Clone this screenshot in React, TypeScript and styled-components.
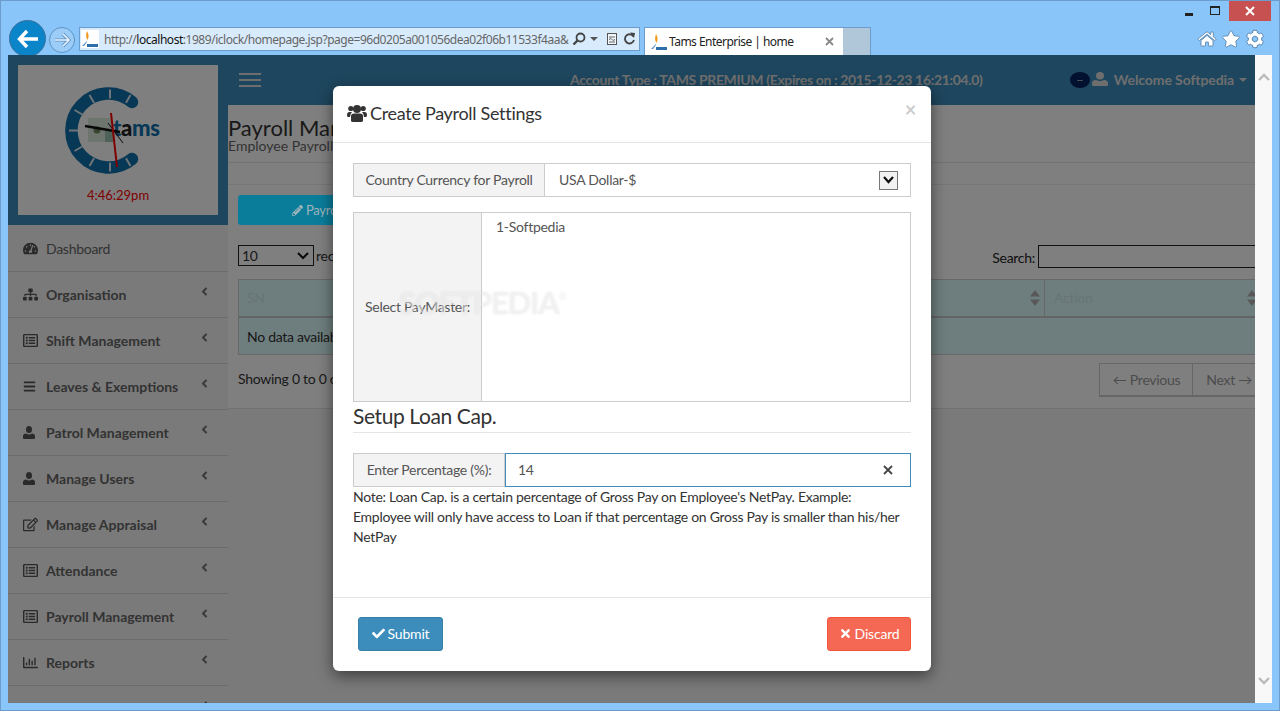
import React from "react";
import styled, { createGlobalStyle } from "styled-components";
import {
  FaTachometerAlt, FaSitemap, FaRegListAlt, FaBars, FaRegEdit, FaRegChartBar,
  FaCheck, FaTimes, FaPencilAlt, FaAngleLeft, FaHome, FaStar, FaCog,
} from "react-icons/fa";

const Global = createGlobalStyle`
  html, body { margin: 0; padding: 0; height: 100%; overflow: hidden; }
  * { box-sizing: border-box; }
  body { font-family: Lato, "Noto Sans", sans-serif; font-size: 14px; color: #333; letter-spacing: -0.28px; }
`;

const Frame = styled.div`
  width: 1280px; height: 711px; background: #8ac5f9; display: flex; flex-direction: column;
  border: 1px solid #6c9ccb; border-bottom: 0; padding: 0 7px 8px; position: relative; overflow: hidden;
  box-shadow: inset 0 -1px 0 #6c9ccb;
`;
const WindowBar = styled.div`
  height: 20px; display: flex; justify-content: flex-end; align-items: flex-start; margin-right: 1px;
`;
const Ctl = styled.div<{ $w: number }>`
  width: ${(p) => p.$w}px; height: 20px; display: flex; align-items: center; justify-content: center; color: #111;
`;
const CloseCtl = styled(Ctl)` background: #c75050; color: #fff; `;
const MinGlyph = styled.span` width: 8px; height: 3px; background: #222; margin-top: 7px; margin-right: 3px; `;
const MaxGlyph = styled.span` width: 10px; height: 9px; border: 1px solid #222; border-top-width: 2px; margin-right: 2px; margin-top: -1px; `;

const NavRow = styled.div`
  height: 34px; display: flex; align-items: flex-start; padding: 6px 0 0 1px;
`;
const BackBtn = styled.div`
  width: 37px; height: 37px; border-radius: 50%; background: #0a85c9; margin-top: -7px; flex: none;
  display: flex; align-items: center; justify-content: center; border: 1px solid #3a6f9c;
`;
const ForwardBtn = styled.div`
  width: 26px; height: 26px; border-radius: 50%; margin: 0 4px 0 3px; flex: none; background: #9ccdf9;
  border: 1px solid #5f93c4; display: flex; align-items: center; justify-content: center;
`;
const UrlBox = styled.div`
  width: 561px; height: 24px; background: #d8ebfc; border: 1px solid #6c9ccb; display: flex; align-items: center;
  flex: none; padding-right: 3px;
`;
const UrlFav = styled.div` width: 18px; height: 18px; margin: 0 5px 0 1px; flex: none; background: #fff; `;
const UrlText = styled.div`
  width: 468px; overflow: hidden; white-space: nowrap; font: 12px "Noto Sans", sans-serif; letter-spacing: -0.47px; color: #666;
  flex: none;
  b { font-weight: 400; color: #111; }
`;
const UrlTools = styled.div`
  margin-left: auto; display: flex; align-items: center; gap: 4px; color: #444;
`;
const CompatIcon = styled.svg` margin-left: 3px; `;
const Caret = styled.span`
  width: 0; height: 0; border: 4px solid transparent; border-top-color: #555; border-bottom: 0;
`;
const TabStrip = styled.div` display: flex; height: 28px; margin-left: 4px; flex: none; border: 1px solid #6c9ccb; border-bottom: 0; `;
const Tab = styled.div`
  width: 198px; background: #fff; display: flex; align-items: center; padding: 0 9px 0 5px;
  font: 12px "Noto Sans", sans-serif; color: #222; letter-spacing: -0.53px; white-space: nowrap;
`;
const TabFav = styled.div` width: 18px; height: 18px; margin-right: 1px; flex: none; `;
const TabClose = styled.span` margin-left: auto; color: #888; display: flex; `;
const TabRest = styled.div` width: 27px; background: #b0c6d9; `;
const ToolIcons = styled.div`
  margin-left: auto; display: flex; align-items: center; gap: 6px; height: 24px; margin-right: 8px; color: #fff;
  svg { stroke: #3f6d99; stroke-width: 22px; overflow: visible; }
`;

const Viewport = styled.div`
  flex: 1; min-height: 0; display: flex; position: relative; overflow: hidden; z-index: 1;
`;
const Page = styled.div` width: 1247px; flex: none; display: flex; overflow: hidden; background: #f5f5f5; `;
const Scrollbar = styled.div`
  flex: 1; background: #f8f8f8; display: flex; flex-direction: column; justify-content: space-between;
  align-items: center; padding: 18px 0; color: #bbb;
`;

const Sidebar = styled.aside` width: 220px; flex: none; background: #f5f5f5; `;
const LogoPanel = styled.div` background: #3c8dbc; padding: 10px; height: 170px; `;
const LogoCard = styled.div`
  background: #fff; height: 150px; display: flex; flex-direction: column; align-items: center;
`;
const LogoSvg = styled.svg` margin: 18px 0 0 -6px; flex: none; `;
const ClockText = styled.div` color: #f00; font-size: 13px; line-height: 18px; letter-spacing: 0; `;
const SideItem = styled.div<{ $top?: boolean }>`
  height: ${(p) => (p.$top ? 47 : 46)}px; display: flex; align-items: center; padding: 0 17px 0 15px; border-bottom: 1px solid #d9d9d9;
  color: #666; font-weight: ${(p) => (p.$top ? 400 : 700)}; white-space: nowrap; font-size: 14px;
  letter-spacing: ${(p) => (p.$top ? "-0.28px" : "0")};
`;
const SideIcon = styled.span` width: 23px; flex: none; display: flex; align-items: center; color: #555; `;
const SideChevron = styled.span` margin-left: auto; display: flex; transform: translateY(-3px); color: #777; `;

const Main = styled.div` flex: 1; min-width: 0; display: flex; flex-direction: column; `;
const Header = styled.header`
  height: 50px; background: #3c8dbc; display: flex; align-items: center; padding: 0 8px 2px 11px; flex: none; color: #dcdcdc;
  font-weight: 700; white-space: nowrap; position: relative;
`;
const Burger = styled.div`
  width: 22px; height: 14px; border-top: 2px solid #ddd; border-bottom: 2px solid #ddd; position: relative; flex: none; margin-top: 2px;
  &::after { content: ""; position: absolute; left: 0; right: 0; top: 4px; height: 2px; background: #ddd; }
`;
const AccountText = styled.div` margin-left: 309px; font-size: 14px; letter-spacing: -0.36px; `;
const UserArea = styled.div` margin-left: auto; display: flex; align-items: center; `;
const Avatar = styled.div`
  width: 20px; height: 16px; border-radius: 50%; background: #03225f; margin-right: 2px; display: flex; align-items: center; justify-content: center;
  color: #ddd; font-size: 8px; line-height: 8px; margin-top: 2px;
`;
const WelcomeLabel = styled.span` margin-left: 6px; letter-spacing: -0.1px; `;
const WelcomeCaret = styled.span`
  width: 0; height: 0; border: 4px solid transparent; border-top-color: #ddd; border-bottom: 0; margin-left: 5px; margin-top: 2px;
`;

const Content = styled.div` flex: none; background: #fff; height: 304px; border-bottom: 1px solid #e4e4e4; `;
const TitleBlock = styled.div` height: 58px; padding: 11px 0 0 0; border-bottom: 1px solid #e6e6e6; `;
const PageTitle = styled.h1` font-size: 22px; font-weight: 400; margin: 0; line-height: 24px; letter-spacing: 0; `;
const PageSub = styled.div` font-size: 14px; line-height: 12px; color: #666; letter-spacing: 0; `;
const Strip = styled.div` height: 22px; border-bottom: 1px solid #eee; `;
const Inner = styled.div` width: 1040px; padding: 10px 0 0 10px; `;
const PrimaryAction = styled.div`
  width: 260px; height: 30px; background: #0a7d9b; border-radius: 3px; color: #9fb4ba; display: flex; align-items: center; gap: 3px;
  font-size: 13px; padding-left: 54px; position: relative; z-index: 1;
`;
const ControlsRow = styled.div` display: flex; align-items: flex-start; margin-top: 20px; height: 21px; `;
const LenSelect = styled.div`
  width: 76px; height: 21px; border: 1px solid #222; display: flex; align-items: center; padding: 0 4px 0 3px; justify-content: space-between;
`;
const LenLabel = styled.span` margin-left: 2px; line-height: 21px; `;
const SearchWrap = styled.div` margin-left: auto; display: flex; align-items: flex-start; color: #222; margin-right: -10px; `;
const SearchLabel = styled.span` line-height: 20px; padding-top: 3px; `;
const SearchInput = styled.div` width: 240px; height: 23px; border: 1px solid #222; margin-left: 3px; background: #fff; `;
const DataTable = styled.div` margin-top: 13px; border: 1px solid #d0d0d0; width: 1030px; background: #dcfcfc; `;
const TableHead = styled.div` height: 38px; display: flex; border-bottom: 2px solid #c9c9c9; `;
const HeadCell = styled.div<{ $w?: number }>`
  width: ${(p) => (p.$w ? `${p.$w}px` : "auto")}; flex: ${(p) => (p.$w ? "none" : "1")}; border-right: ${(p) => (p.$w ? "1px solid #cfcfcf" : "0")};
  display: flex; align-items: center; justify-content: space-between;
  padding: 0 ${(p) => (p.$w ? 4 : 10)}px 2px ${(p) => (p.$w ? 8 : 9)}px; color: #d0eaea;
`;
const SortIcon = styled.svg` flex: none; margin-top: 2px; `;
const TableRow = styled.div` height: 36px; display: flex; align-items: center; padding-left: 8px; `;
const TableFoot = styled.div` display: flex; align-items: flex-start; justify-content: space-between; margin-top: 8px; `;
const FootText = styled.div` line-height: 32px; color: #333; `;
const Pager = styled.div` display: flex; height: 34px; border: 1px solid #ccc; border-bottom-width: 2px; color: #999; margin-right: 3px; `;
const PagerItem = styled.div` padding: 0 12px 0 13px; display: flex; align-items: center; border-right: 1px solid #ccc; white-space: nowrap;
  &:last-child { border-right: 0; }
`;

const Backdrop = styled.div` position: absolute; left: 0; top: 0; bottom: 0; width: 1247px; background: rgba(0,0,0,.5); `;
const Modal = styled.div`
  position: absolute; z-index: 2; left: 325px; top: 31px; width: 598px; height: 585px; background: #fff; border-radius: 6px;
  box-shadow: 0 5px 15px rgba(0,0,0,.5); display: flex; flex-direction: column;
`;
const ModalHead = styled.div`
  height: 57px; padding: 0 15px 2px 14px; border-bottom: 1px solid #e5e5e5; display: flex; align-items: center; flex: none; position: relative;
`;
const ModalTitle = styled.h4` margin: 0; font-size: 18px; font-weight: 400; display: flex; align-items: center; gap: 3px; color: #333; letter-spacing: -0.3px; `;
const ModalClose = styled.span`
  position: absolute; right: 15px; top: 12px; font-size: 20px; font-weight: 700; color: #000; opacity: .2; line-height: 22px;
`;
const ModalBody = styled.div` flex: 1; padding: 20px 20px 0; `;
const Group = styled.div<{ $h: number }>`
  display: flex; height: ${(p) => p.$h}px; border: 1px solid #ccc; color: #555;
`;
const Addon = styled.div<{ $w: number }>`
  width: ${(p) => p.$w}px; flex: none; background: #f3f3f3; border-right: 1px solid #ccc; display: flex; align-items: center; justify-content: center; white-space: nowrap; padding-bottom: 2px;
`;
const SelectBox = styled.div` flex: 1; display: flex; align-items: center; padding: 0 12px 0 14px; justify-content: space-between; `;
const SelectText = styled.span` padding-bottom: 2px; `;
const SelectArrow = styled.span`
  width: 19px; height: 19px; border: 1px solid #777; background: #f2f2f2; display: flex; align-items: center; justify-content: center;
`;
const ListBox = styled.div` flex: 1; padding: 4px 14px; line-height: 20px; `;
const GroupGap = styled.div` height: 15px; `;
const SectionTitle = styled.h3`
  margin: 0 0 20px; font-size: 21px; font-weight: 400; line-height: 28px; height: 31px; border-bottom: 1px solid #e5e5e5; color: #333; letter-spacing: -0.4px;
`;
const FieldInput = styled.div`
  flex: 1; margin: -1px -1px -1px 0; border: 1px solid #3c8dbc; display: flex; align-items: center; justify-content: space-between; padding: 0 17px 0 12px; color: #555;
`;
const FieldClear = styled.span` display: flex; color: #444; `;
const Note = styled.p` margin: 0; line-height: 20px; color: #333; `;
const ModalFoot = styled.div`
  height: 74px; border-top: 1px solid #e5e5e5; flex: none; display: flex; align-items: flex-start; justify-content: space-between; padding: 19px 20px 0 25px;
`;
const FootBtn = styled.button<{ $bg: string; $line: string; $w: number }>`
  width: ${(p) => p.$w}px; height: 34px; background: ${(p) => p.$bg}; border: 1px solid ${(p) => p.$line}; color: #fff; border-radius: 3px;
  font: 14px Lato, "Noto Sans", sans-serif; letter-spacing: -0.2px; display: flex; align-items: center; justify-content: center; gap: 3px; padding: 0 0 2px;
`;
const Watermark = styled.div`
  position: absolute; z-index: 3; left: 391px; top: 228px; font-size: 31px; font-weight: 700; color: rgba(255,255,255,.42); letter-spacing: -1.1px;
  text-shadow: 0 0 2px rgba(160,160,160,.25); pointer-events: none; white-space: nowrap;
  sup { font-size: 10px; vertical-align: 14px; font-weight: 400; }
`;

const Fav = () => (
  <svg width="18" height="18" viewBox="0 0 18 18">
    <rect width="18" height="18" fill="#fff" />
    <path d="M6 1c2 3 2 6 .5 9C5 8 4.5 5 6 1z" fill="#f29a1c" />
    <path d="M6 11L1 16h2l3-4z" fill="#5a8fc9" />
    <rect x="6" y="14" width="11" height="3" fill="#2d6fa8" />
  </svg>
);

const UserIcon = ({ w, h }: { w: number; h: number }) => (
  <svg width={w} height={h} viewBox="0 0 12 13" preserveAspectRatio="none" fill="currentColor">
    <ellipse cx="6" cy="3.5" rx="3" ry="3.5" />
    <path d="M0 12V10Q0 8 3 7.5Q6 9.5 9 7.5Q12 8 12 10V12Q12 13 11 13H1Q0 13 0 12z" />
  </svg>
);

const UsersIcon = () => (
  <svg width="20" height="18" viewBox="0 0 20 18" fill="#333">
    <circle cx="3.8" cy="4.5" r="2.6" />
    <circle cx="16.2" cy="4.5" r="2.6" />
    <circle cx="10" cy="5" r="4" />
    <path d="M4 16.5V12Q4 9.5 7 9.5H13Q16 9.5 16 12V16.5Q16 18 14 18H6Q4 18 4 16.5z" />
    <path d="M0 11Q0 8 2.5 8H5Q3 10 3 13H1Q0 13 0 11zM20 11Q20 8 17.5 8H15Q17 10 17 13H19Q20 13 20 11z" />
  </svg>
);

const Logo = () => (
  <LogoSvg width="110" height="103" viewBox="0 0 110 103">
    <path d="M72 19A37 37 0 1 0 72 76" fill="none" stroke="#0e70ad" strokeWidth="12.5" strokeLinecap="round" />
    <path
      d="M50 6.5V15.5M50 79.5V88.5M9 47.5H18M34 19.8L29.5 12M66 19.8L70.5 12M22.3 31.5L14.5 27M22.3 63.5L14.5 68M34 75.2L29.5 83M66 75.2L70.5 83"
      stroke="#dfeaf0" strokeWidth="2"
    />
    <rect x="28" y="35" width="24" height="24" fill="#dce8dd" />
    <rect x="45" y="47" width="8" height="12" fill="#9cc5b4" />
    <circle cx="37" cy="47" r="3.5" fill="#6f8a5f" />
    <text x="53" y="53" fontFamily="Lato, sans-serif" fontWeight="900" fontSize="22" fill="#0e70ad">
      t<tspan fill="#222">a</tspan>ms
    </text>
    <path d="M25 43L60 49" stroke="#111" strokeWidth="2.4" fill="none" />
    <path d="M48 40L63 60" stroke="#111" strokeWidth="1" fill="none" />
    <path d="M51 30L57 84" stroke="#f00" strokeWidth="2" fill="none" />
  </LogoSvg>
);

const items: [React.ReactNode, string][] = [
  [<FaSitemap size={15} />, "Organisation"],
  [<FaRegListAlt size={15} />, "Shift Management"],
  [<FaBars size={13} />, "Leaves & Exemptions"],
  [<UserIcon w={12} h={13} />, "Patrol Management"],
  [<UserIcon w={12} h={13} />, "Manage Users"],
  [<FaRegEdit size={15} />, "Manage Appraisal"],
  [<FaRegListAlt size={15} />, "Attendance"],
  [<FaRegListAlt size={15} />, "Payroll Management"],
  [<FaRegChartBar size={15} />, "Reports"],
  [null, ""],
];

const Sort = () => (
  <SortIcon width="10" height="16" viewBox="0 0 10 16" fill="#b0b0b0"><path d="M0 6.5L5 0l5 6.5zM0 9.5h10L5 16z" /></SortIcon>
);

export default function App() {
  return (
    <>
      <Global />
      <Frame>
        <WindowBar>
          <Ctl $w={26}><MinGlyph /></Ctl>
          <Ctl $w={26}><MaxGlyph /></Ctl>
          <CloseCtl $w={42}>
            <svg width="10" height="10" viewBox="0 0 10 10"><path d="M1 1l8 8M9 1l-8 8" stroke="#fff" strokeWidth="2" /></svg>
          </CloseCtl>
        </WindowBar>
        <NavRow>
          <BackBtn>
            <svg width="22" height="20" viewBox="0 0 22 20"><path d="M10 2L2.5 10l7.5 8M3 10h18" fill="none" stroke="#fff" strokeWidth="3.4" /></svg>
          </BackBtn>
          <ForwardBtn>
            <svg width="18" height="16" viewBox="0 0 18 16"><path d="M10 2l6 6-6 6M16 8H2" fill="none" stroke="#5f93c4" strokeWidth="3.2" /><path d="M10 2l6 6-6 6M16 8H2" fill="none" stroke="#eaf4fd" strokeWidth="1.6" /></svg>
          </ForwardBtn>
          <UrlBox>
            <UrlFav><Fav /></UrlFav>
            <UrlText>http://<b>localhost</b>:1989/iclock/homepage.jsp?page=96d0205a001056dea02f06b11533f4aa&amp;</UrlText>
            <UrlTools>
              <svg width="14" height="14" viewBox="0 0 14 14"><circle cx="8.5" cy="5.5" r="4" fill="none" stroke="#444" strokeWidth="1.8" /><path d="M5.5 8.5L1.5 12.5" stroke="#444" strokeWidth="2.4" /></svg>
              <Caret />
              <CompatIcon width="14" height="14" viewBox="0 0 14 14"><rect x="2.5" y="1.5" width="9" height="11" fill="#eef5fb" stroke="#555" /><path d="M4 5h6M4 7.5l2-1 2 2 2-1M4 10h6" stroke="#666" fill="none" /></CompatIcon>
              <svg width="13" height="14" viewBox="0 0 13 14"><path d="M10.5 4.5A4.6 4.6 0 1 0 11 8" fill="none" stroke="#444" strokeWidth="1.8" /><path d="M7 0.5l5 0.5-1 5z" fill="#444" /></svg>
            </UrlTools>
          </UrlBox>
          <TabStrip>
            <Tab>
              <TabFav><Fav /></TabFav>
              Tams Enterprise | home
              <TabClose><svg width="9" height="9" viewBox="0 0 9 9"><path d="M1 1l7 7M8 1L1 8" stroke="#888" strokeWidth="1.8" /></svg></TabClose>
            </Tab>
            <TabRest />
          </TabStrip>
          <ToolIcons>
            <FaHome size={18} />
            <FaStar size={18} />
            <FaCog size={18} />
          </ToolIcons>
        </NavRow>
        <Viewport>
          <Page>
            <Sidebar>
              <LogoPanel>
                <LogoCard>
                  <Logo />
                  <ClockText>4:46:29pm</ClockText>
                </LogoCard>
              </LogoPanel>
              <SideItem $top>
                <SideIcon><FaTachometerAlt size={15} /></SideIcon>Dashboard
              </SideItem>
              {items.map(([icon, label], i) => (
                <SideItem key={i}>
                  <SideIcon>{icon}</SideIcon>{label}
                  <SideChevron><FaAngleLeft size={13} /></SideChevron>
                </SideItem>
              ))}
            </Sidebar>
            <Main>
              <Header>
                <Burger />
                <AccountText>Account Type : TAMS PREMIUM (Expires on : 2015-12-23 16:21:04.0)</AccountText>
                <UserArea>
                  <Avatar>--</Avatar>
                  <UserIcon w={16} h={14} />
                  <WelcomeLabel>Welcome Softpedia</WelcomeLabel>
                  <WelcomeCaret />
                </UserArea>
              </Header>
              <Content>
                <TitleBlock>
                  <PageTitle>Payroll Management</PageTitle>
                  <PageSub>Employee Payroll</PageSub>
                </TitleBlock>
                <Strip />
                <Inner>
                  <PrimaryAction><FaPencilAlt size={11} /> Payroll</PrimaryAction>
                  <ControlsRow>
                    <LenSelect>10 <svg width="12" height="8" viewBox="0 0 12 8"><path d="M1 1l5 5 5-5" fill="none" stroke="#111" strokeWidth="2" /></svg></LenSelect>
                    <LenLabel>records</LenLabel>
                    <SearchWrap><SearchLabel>Search:</SearchLabel><SearchInput /></SearchWrap>
                  </ControlsRow>
                  <DataTable>
                    <TableHead>
                      <HeadCell $w={806}>SN<Sort /></HeadCell>
                      <HeadCell>Action<Sort /></HeadCell>
                    </TableHead>
                    <TableRow>No data available in table</TableRow>
                  </DataTable>
                  <TableFoot>
                    <FootText>Showing 0 to 0 of 0 entries</FootText>
                    <Pager>
                      <PagerItem>← Previous</PagerItem>
                      <PagerItem>Next →</PagerItem>
                    </Pager>
                  </TableFoot>
                </Inner>
              </Content>
            </Main>
          </Page>
          <Scrollbar>
            <svg width="12" height="8" viewBox="0 0 12 8"><path d="M1 7l5-5 5 5" fill="none" stroke="#bbb" strokeWidth="2.4" /></svg>
            <svg width="12" height="8" viewBox="0 0 12 8"><path d="M1 1l5 5 5-5" fill="none" stroke="#bbb" strokeWidth="2.4" /></svg>
          </Scrollbar>
          <Backdrop />
          <Modal>
            <ModalHead>
              <ModalTitle><UsersIcon />Create Payroll Settings</ModalTitle>
              <ModalClose>×</ModalClose>
            </ModalHead>
            <ModalBody>
              <Group $h={34}>
                <Addon $w={191}>Country Currency for Payroll</Addon>
                <SelectBox>
                  <SelectText>USA Dollar-$</SelectText>
                  <SelectArrow>
                    <svg width="11" height="8" viewBox="0 0 11 8"><path d="M1 1l4.5 5L10 1" fill="none" stroke="#111" strokeWidth="2.2" /></svg>
                  </SelectArrow>
                </SelectBox>
              </Group>
              <GroupGap />
              <Group $h={190}>
                <Addon $w={128}>Select PayMaster:</Addon>
                <ListBox>1-Softpedia</ListBox>
              </Group>
              <SectionTitle>Setup Loan Cap.</SectionTitle>
              <Group $h={34}>
                <Addon $w={151}>Enter Percentage (%):</Addon>
                <FieldInput>
                  <SelectText>14</SelectText>
                  <FieldClear><svg width="10" height="10" viewBox="0 0 10 10"><path d="M1 1l8 8M9 1L1 9" stroke="#444" strokeWidth="1.8" /></svg></FieldClear>
                </FieldInput>
              </Group>
              <Note>Note: Loan Cap. is a certain percentage of Gross Pay on Employee's NetPay. Example: Employee will only have access to Loan if that percentage on Gross Pay is smaller than his/her NetPay</Note>
            </ModalBody>
            <ModalFoot>
              <FootBtn $bg="#3c8dbc" $line="#367fa9" $w={85}><FaCheck size={13} />Submit</FootBtn>
              <FootBtn $bg="#f56954" $line="#f4543c" $w={84}><FaTimes size={13} />Discard</FootBtn>
            </ModalFoot>
          </Modal>
          <Watermark>SOFTPEDIA<sup>®</sup></Watermark>
        </Viewport>
      </Frame>
    </>
  );
}
